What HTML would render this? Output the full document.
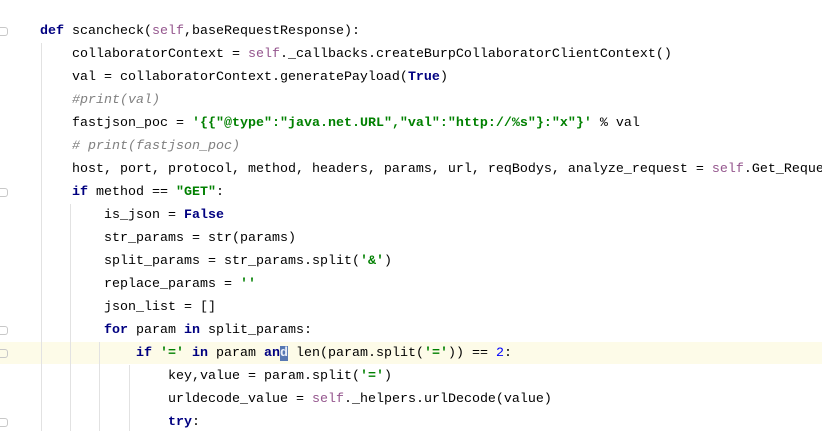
<!DOCTYPE html>
<html><head><meta charset="utf-8"><style>
body{margin:0;width:822px;height:431px;overflow:hidden;background:#fff;position:relative;font-family:"Liberation Mono","Noto Sans CJK SC",monospace;font-size:13.33px;color:#000}
.l{position:absolute;height:23px;line-height:23px;white-space:pre;left:40px}
.k{color:#000080;font-weight:bold}
.s{color:#94558d}
.g{color:#008000;font-weight:bold}
.c{color:#808080;font-style:italic}
.n{color:#0000ff}
.hl{position:absolute;left:0;top:342px;width:822px;height:22px;background:#fdfbe8}
.gd{position:absolute;width:1px;background:#e2e2e2}
.f{position:absolute;left:0;width:8px;height:9px;border:1px solid #c8c8c8;border-left:none;box-sizing:border-box;border-radius:0 3px 3px 0}
.sel{background:#5778b3;color:#e8eef8}
</style></head><body>
<div class="hl"></div>
<div class="gd" style="left:41px;top:43px;height:388px"></div>
<div class="gd" style="left:70px;top:204px;height:227px"></div>
<div class="gd" style="left:99px;top:342px;height:89px"></div>
<div class="gd" style="left:129px;top:365px;height:66px"></div>
<div class="f" style="top:27px"></div>
<div class="f" style="top:188px"></div>
<div class="f" style="top:326px"></div>
<div class="f" style="top:349px"></div>
<div class="f" style="top:418px"></div>
<div class="l" style="top:20px"><span class="k">def</span> scancheck(<span class="s">self</span>,baseRequestResponse):</div>
<div class="l" style="top:43px;left:72px">collaboratorContext = <span class="s">self</span>._callbacks.createBurpCollaboratorClientContext()</div>
<div class="l" style="top:66px;left:72px">val = collaboratorContext.generatePayload(<span class="k">True</span>)</div>
<div class="l c" style="top:89px;left:72px">#print(val)</div>
<div class="l" style="top:112px;left:72px">fastjson_poc = <span class="g">'{{"@type":"java.net.URL","val":"http://%s"}:"x"}'</span> % val</div>
<div class="l c" style="top:135px;left:72px"># print(fastjson_poc)</div>
<div class="l" style="top:158px;left:72px">host, port, protocol, method, headers, params, url, reqBodys, analyze_request = <span class="s">self</span>.Get_Reque</div>
<div class="l" style="top:181px;left:72px"><span class="k">if</span> method == <span class="g">"GET"</span>:</div>
<div class="l" style="top:204px;left:104px">is_json = <span class="k">False</span></div>
<div class="l" style="top:227px;left:104px">str_params = str(params)</div>
<div class="l" style="top:250px;left:104px">split_params = str_params.split(<span class="g">'&amp;'</span>)</div>
<div class="l" style="top:273px;left:104px">replace_params = <span class="g">''</span></div>
<div class="l" style="top:296px;left:104px">json_list = []</div>
<div class="l" style="top:319px;left:104px"><span class="k">for</span> param <span class="k">in</span> split_params:</div>
<div class="l" style="top:342px;left:136px"><span class="k">if</span> <span class="g">'='</span> <span class="k">in</span> param <span class="k">an</span><span class="k sel">d</span> len(param.split(<span class="g">'='</span>)) == <span class="n">2</span>:</div>
<div class="l" style="top:365px;left:168px">key,value = param.split(<span class="g">'='</span>)</div>
<div class="l" style="top:388px;left:168px">urldecode_value = <span class="s">self</span>._helpers.urlDecode(value)</div>
<div class="l" style="top:411px;left:168px"><span class="k">try</span>:</div>
</body></html>
